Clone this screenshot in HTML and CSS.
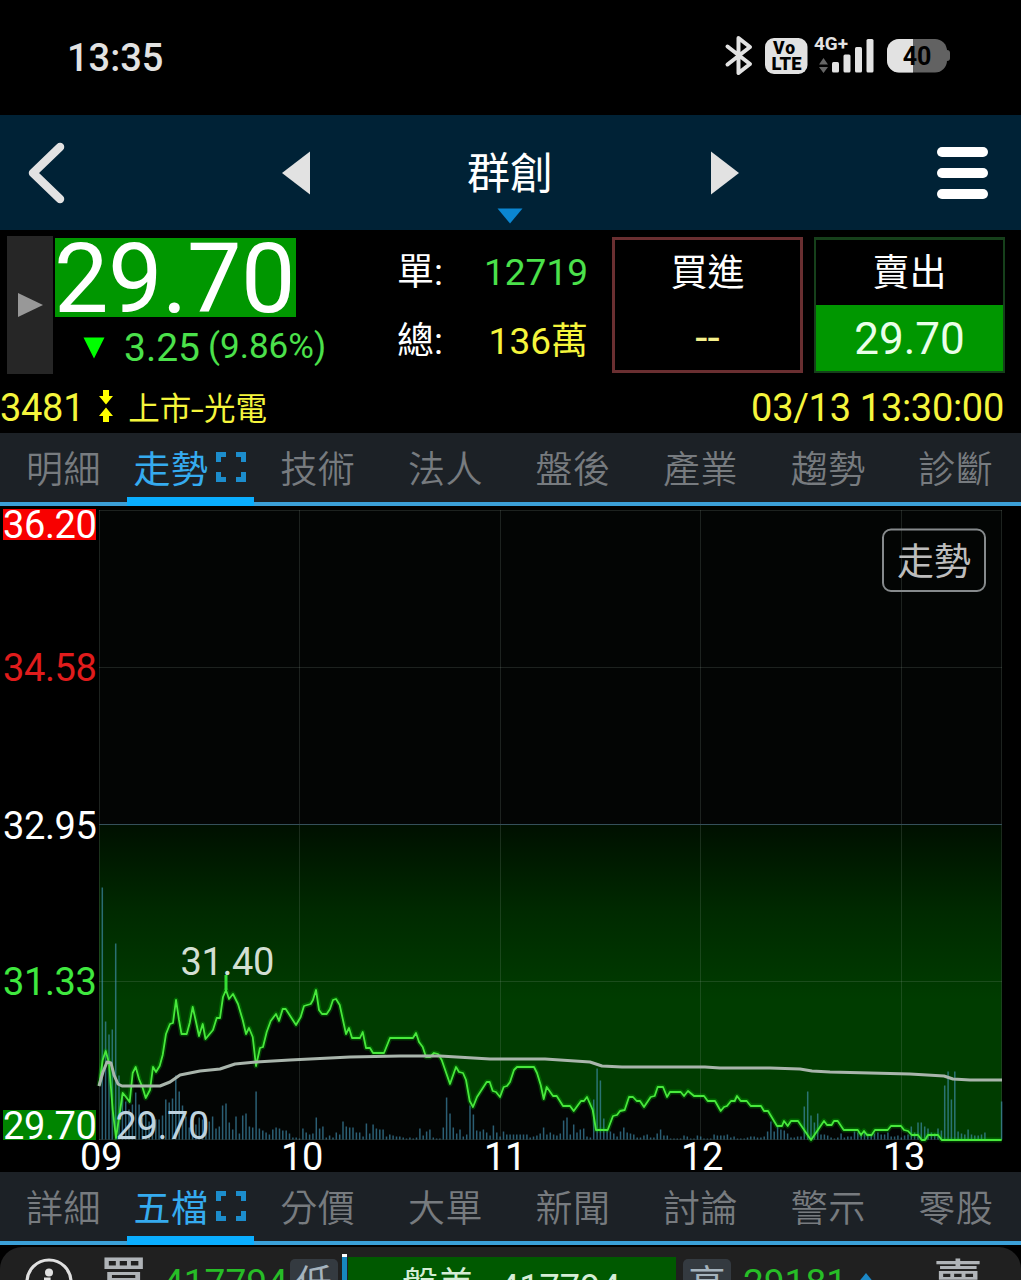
FILE: index.html
```html
<!DOCTYPE html>
<html lang="zh-TW">

<head>
    <meta charset="UTF-8">
    <meta name="viewport" content="width=device-width, initial-scale=1.0">
    <title>群創 3481</title>
    <link rel="stylesheet" href="styles.css">
</head>

<body>
    <div class="status-bar">
        <div class="clock">13:35</div>
        <svg class="status-icons" width="230" height="50" viewBox="720 30 230 50">
            <!-- 藍牙 -->
            <path d="M727.5 46.5 L750 64 L738.5 73 V38 L750 47 L727.5 64.5" fill="none" stroke="#e2e2e2" stroke-width="4" stroke-linecap="round" stroke-linejoin="round" />
            <!-- VoLTE -->
            <rect x="765" y="38" width="42.500" height="36" rx="9" fill="#e2e2e2" />
            <text class="volte" x="784" y="53.500" text-anchor="middle" textLength="22">Vo</text>
            <text class="volte" x="786.500" y="69.500" text-anchor="middle" textLength="30" lengthAdjust="spacingAndGlyphs">LTE</text>
            <!-- 訊號 -->
            <text class="net" x="814" y="50" textLength="34" lengthAdjust="spacingAndGlyphs">4G+</text>
            <path d="M819 64.500 L823.500 58 L828 64.500Z M819 67 L823.500 73 L828 67Z" fill="#666" />
            <g fill="#e2e2e2">
                <rect x="832" y="62" width="7" height="10.500" rx="1.500" />
                <rect x="843.500" y="54.500" width="7" height="18" rx="1.500" />
                <rect x="855" y="47" width="7" height="25.500" rx="1.500" />
                <rect x="866.500" y="39" width="7" height="33.500" rx="1.500" />
            </g>
            <!-- 電池 -->
            <rect x="887" y="39" width="60" height="33.500" rx="12" fill="#626262" />
            <rect x="944" y="50" width="6" height="11" rx="3" fill="#626262" />
            <path d="M913 39 H899 A12 12 0 0 0 887 51 V60.500 A12 12 0 0 0 899 72.500 H913Z" fill="#e2e2e2" />
            <text class="battery" x="917" y="64.500" text-anchor="middle">40</text>
        </svg>
    </div>

    <header class="title-bar">
        <svg class="back" width="40" height="64" viewBox="0 0 40 64"><path d="M33 6 L6 32 L33 58" /></svg>
        <svg class="prev" width="30" height="44" viewBox="0 0 30 44"><path d="M1 22 L29 0.500 V43.500Z" /></svg>
        <div class="stock-name">
            <span>群創</span>
            <svg width="26" height="16" viewBox="0 0 26 16"><path d="M0.500 0.500 H25.500 L13 15.500Z" /></svg>
        </div>
        <svg class="next" width="30" height="44" viewBox="0 0 30 44"><path d="M29 22 L1 0.500 V43.500Z" /></svg>
        <div class="menu"><i></i><i></i><i></i></div>
    </header>

    <section class="quote">
        <div class="quote-main">
            <div class="expand"><svg width="25" height="26" viewBox="0 0 25 26"><path d="M0 1 L25 13 L0 25Z" /></svg></div>
            <div class="price-box">
                <div class="price">29.70</div>
                <div class="change">
                    <svg width="22" height="22" viewBox="0 0 22 22"><path d="M0.500 0.500 H21.500 L11 21.500Z" /></svg>
                    <span class="diff">3.25</span>
                    <span class="percent">(9.86%)</span>
                </div>
            </div>
            <dl class="volume">
                <dt>單:</dt>
                <dd class="down">12719</dd>
                <dt>總:</dt>
                <dd class="flat">136萬</dd>
            </dl>
            <div class="order buy">
                <div>買進</div>
                <div class="order-price">--</div>
            </div>
            <div class="order sell">
                <div>賣出</div>
                <div class="order-price">29.70</div>
            </div>
        </div>
        <div class="quote-info">
            <span class="code">3481</span>
            <svg width="14" height="32" viewBox="0 0 14 32"><path d="M4 0 H10 V6 H14 L7 14.500 L0 6 H4Z M4 32 H10 V26 H14 L7 17.500 L0 26 H4Z" /></svg>
            <span class="market">上市<b>-</b>光電</span>
            <span class="time">03/13 13:30:00</span>
        </div>
    </section>

    <nav class="tabs">
        <a>明細</a>
        <a class="active">走勢<svg width="30" height="30" viewBox="0 0 30 30"><path d="M2.500 10 V2.500 H10 M20 2.500 H27.500 V10 M27.500 20 V27.500 H20 M10 27.500 H2.500 V20" /></svg></a>
        <a>技術</a>
        <a>法人</a>
        <a>盤後</a>
        <a>產業</a>
        <a>趨勢</a>
        <a>診斷</a>
    </nav>

    <svg class="chart" width="1021" height="666" viewBox="0 506 1021 666">
        <defs>
            <linearGradient id="fall" gradientUnits="userSpaceOnUse" x1="0" y1="824" x2="0" y2="1000">
                <stop offset="0" stop-color="#001000" />
                <stop offset="0.500" stop-color="#002a00" />
                <stop offset="1" stop-color="#003c00" />
            </linearGradient>
        </defs>
        <rect x="99" y="510" width="903" height="630" fill="#030504" />
        <path id="fallArea" fill="url(#fall)" />
        <path class="grid" d="M99 510.500 H1002 M99 667.500 H1002 M99 981.500 H1002 M99 1139.500 H1002 M99.500 510 V1140 M299.500 510 V1140 M500.500 510 V1140 M700.500 510 V1140 M901.500 510 V1140 M1001.500 510 V1140" />
        <path class="base-line" d="M99 824.500 H1002" />
        <path id="volumeBars" />
        <path id="priceGlow" />
        <path id="priceLine" />
        <path class="high-mark" d="M226 975 V990" />
        <path id="avgLine" />

        <rect x="3" y="509" width="93" height="31" fill="#f80000" />
        <rect x="3" y="1110" width="93" height="30" fill="#008500" />
        <g class="axis">
            <text x="3" y="538" fill="#fff">36.20</text>
            <text x="3" y="681" fill="#e01c1c">34.58</text>
            <text x="3" y="839" fill="#fff">32.95</text>
            <text x="3" y="995" fill="#3fe83f">31.33</text>
            <text x="3" y="1139" fill="#fff">29.70</text>
            <text x="80" y="1170" fill="#fff">09</text>
            <text x="281" y="1170" fill="#fff">10</text>
            <text x="484" y="1170" fill="#fff">11</text>
            <text x="681" y="1170" fill="#fff">12</text>
            <text x="883" y="1170" fill="#fff">13</text>
            <text x="180.500" y="975" fill="#d3dfd3">31.40</text>
            <text x="115.500" y="1139" fill="#bfd3df">29.70</text>
        </g>
        <rect class="mode-box" x="883" y="529.500" width="102" height="61.500" rx="8" />
        <text class="mode" x="897" y="575">走勢</text>
    </svg>

    <nav class="tabs">
        <a>詳細</a>
        <a class="active">五檔<svg width="30" height="30" viewBox="0 0 30 30"><path d="M2.500 10 V2.500 H10 M20 2.500 H27.500 V10 M27.500 20 V27.500 H20 M10 27.500 H2.500 V20" /></svg></a>
        <a>分價</a>
        <a>大單</a>
        <a>新聞</a>
        <a>討論</a>
        <a>警示</a>
        <a>零股</a>
    </nav>

    <section class="depth">
        <svg class="info" width="48" height="48" viewBox="0 0 48 48"><circle cx="24" cy="24" r="22" /><circle class="dot" cx="24" cy="14.500" r="4" /><path d="M19 21 H24 V36 M18 36 H30" /></svg>
        <div class="side">買</div>
        <div class="amount">417794</div>
        <div class="tag">低</div>
        <div class="marker"></div>
        <div class="gap-bar"><span>盤差</span><span class="num">417794</span></div>
        <div class="tag">高</div>
        <div class="amount sell-amount">29181</div>
        <svg class="up" width="18" height="18" viewBox="0 0 18 18"><path d="M9 0 L18 11 H0Z" /></svg>
        <div class="side sell-side">賣</div>
    </section>

    <script src="chart.js"></script>
</body>

</html>
```

FILE: styles.css
```css
:root {
    --green: #4be14b;
    --yellow: #f5f53c;
    --tab-background: #1c2126;
    --tab-color: #777b7f;
}

* {
    box-sizing: border-box;
}

body {
    margin: 0;
    width: 1021px;
    height: 1280px;
    overflow: hidden;
    background: #000;
    color: #fff;
    font-family: Roboto, "Noto Sans CJK TC", sans-serif;
    font-size: 38px;
    display: flex;
    flex-direction: column;
}

svg {
    display: block;
    flex: none;
}

/* 狀態列 */
.status-bar {
    flex: none;
    height: 115px;
    padding: 30px 71px 0 67px;
    display: flex;
    justify-content: space-between;
}

.clock {
    font-size: 38px;
    font-weight: 500;
    line-height: 57px;
    color: #e2e2e2;
}

.volte,
.net,
.battery {
    font-family: Roboto, sans-serif;
    font-weight: 900;
}

.volte {
    font-size: 17.5px;
}

.net {
    font-size: 18px;
    font-weight: 700;
    fill: #e2e2e2;
}

.battery {
    font-size: 25px;
    font-weight: 700;
}

/* 標題列 */
.title-bar {
    flex: none;
    height: 115px;
    background: #002236;
    padding: 0 33px 0 27px;
    display: grid;
    grid-template-columns: 254px 119px 220px 133px 1fr;
    align-items: center;
}

.back path {
    fill: none;
    stroke: #e2e2e2;
    stroke-width: 8.5;
    stroke-linecap: round;
    stroke-linejoin: round;
}

.prev path,
.next path {
    fill: #e2e2e2;
}

.next {
    justify-self: end;
    margin-right: 13px;
}

.stock-name {
    height: 115px;
    padding-top: 28px;
    display: flex;
    flex-direction: column;
    align-items: center;
    font-size: 43px;
    line-height: 62px;
}

.stock-name svg {
    margin-top: 3px;
}

.stock-name path {
    fill: #0b86d1;
}

.menu {
    justify-self: end;
    display: flex;
    flex-direction: column;
    gap: 11px;
}

.menu i {
    width: 51px;
    height: 10px;
    border-radius: 5px;
    background: #fff;
}

/* 報價 */
.quote {
    flex: none;
    height: 203px;
    padding-top: 6px;
}

.quote-main {
    height: 138px;
    padding: 0 16px 0 7px;
    display: flex;
}

.expand {
    width: 46px;
    background: #262626;
    display: flex;
    align-items: center;
    justify-content: center;
}

.expand path {
    fill: #989898;
}

.price-box {
    width: 344px;
    padding: 2px 0 0 2px;
}

.price {
    width: 241px;
    height: 79px;
    background: #009700;
    font-size: 97px;
    line-height: 83px;
    letter-spacing: -0.5px;
    text-indent: -1px;
    white-space: nowrap;
}

.change {
    margin-top: 7px;
    padding-left: 28px;
    display: flex;
    align-items: center;
    height: 48px;
    color: var(--green);
}

.change path {
    fill: #00ff00;
}

.diff {
    margin-left: 19px;
    font-size: 39px;
}

.percent {
    margin: -3px 0 0 8px;
    font-size: 35px;
}

.volume {
    width: 208px;
    margin: 0;
    padding-right: 17px;
    display: grid;
    grid-template-columns: 50px 1fr;
    grid-template-rows: 69px 69px;
    line-height: 73px;
    white-space: nowrap;
}

.volume dt {
    font-size: 37px;
    line-height: 74px;
}

.volume dd {
    margin: 0;
    text-align: right;
    font-size: 37px;
}

.down {
    color: var(--green);
}

.volume .flat {
    color: var(--yellow);
}

.order {
    height: 136px;
    width: 191px;
    margin: 1px 11px 0 7px;
    border: 3px solid #6a2f31;
    font-size: 37px;
    line-height: 68px;
    text-align: center;
}

.order.sell {
    margin: 1px 0 0 0;
    border-color: #16401b;
    border-width: 3px 2px 2px;
}

.buy .order-price {
    color: #f5f08c;
    font-size: 44px;
    line-height: 61px;
}

.sell .order-price {
    margin-top: -3px;
    height: 66px;
    background: #009700;
    font-size: 44px;
    line-height: 68px;
    color: #e9ffe9;
}

.quote-info {
    height: 59px;
    padding: 9px 17px 0 0;
    display: flex;
    align-items: center;
    color: var(--yellow);
    white-space: nowrap;
}

.quote-info svg {
    margin: -4px 0 0 15px;
}

.quote-info path {
    fill: #ffff00;
}

.code,
.time {
    font-size: 38px;
    letter-spacing: -0.3px;
}

.market {
    margin: -5px 0 0 15px;
    font-size: 31.5px;
}

.market b {
    display: inline-block;
    font-weight: 400;
    transform: scaleX(1.5);
    margin: 0 2px;
}

.time {
    margin-left: auto;
}

/* 分頁 */
.tabs {
    flex: none;
    height: 73px;
    background: var(--tab-background);
    box-shadow: inset 0 -4px #3ba0d8;
    display: grid;
    grid-template-columns: 127px 127px repeat(6, 127.6px);
}

.tabs a {
    display: flex;
    justify-content: center;
    align-items: center;
    padding-bottom: 6px;
    font-size: 37px;
    font-weight: 350;
    letter-spacing: 0.5px;
    color: var(--tab-color);
    white-space: nowrap;
}

.tabs .active {
    padding-right: 2px;
    color: #35abef;
    font-weight: 400;
    box-shadow: inset 0 -9px #0aaeff;
}

.tabs svg {
    margin-left: 7px;
}

.tabs path {
    fill: none;
    stroke: #1c8dcc;
    stroke-width: 5;
}

/* 走勢圖 */
.grid {
    fill: none;
    stroke: #a0b4a8;
    stroke-opacity: 0.17;
}

.base-line {
    stroke: #35505a;
}

#volumeBars {
    stroke: #4496b9;
    stroke-opacity: 0.62;
    stroke-width: 1.5;
}

#priceGlow,
#priceLine,
#avgLine {
    fill: none;
    stroke-linejoin: round;
}

#priceGlow {
    stroke: #00d800;
    stroke-opacity: 0.25;
    stroke-width: 5;
}

#priceLine {
    stroke: #48e83c;
    stroke-width: 1.8;
}

#avgLine {
    stroke: #a9b5ac;
    stroke-width: 3;
}

.high-mark {
    stroke: #35dc35;
    stroke-width: 3;
}

.axis {
    font-size: 38px;
    letter-spacing: -0.4px;
}

.mode-box {
    fill: none;
    stroke: #868a8c;
    stroke-width: 2;
}

.mode {
    font-size: 37px;
    fill: #bdbdbd;
}

/* 五檔 */
.depth {
    flex: none;
    height: 80px;
    margin-top: 2px;
    background: #202020;
    border-radius: 22px 22px 0 0;
    display: grid;
    grid-template-columns: 99px 64px 126px 52px 7px 328px 62px 113px 82px 1fr;
    line-height: 48px;
    white-space: nowrap;
}

.info {
    margin: 11px 0 0 25px;
}

.info circle,
.info path {
    fill: none;
    stroke: #e0e0e0;
    stroke-width: 3.2;
}

.info .dot {
    fill: #e0e0e0;
    stroke: none;
}

.side {
    font-size: 49px;
    font-weight: 500;
    color: #b0b4b8;
    padding-top: 10px;
}

.sell-side {
    font-size: 50px;
    padding-top: 13px;
}

.amount {
    padding-top: 12px;
    font-size: 37px;
    color: #27bd27;
}

.sell-amount {
    padding-left: 5px;
}

.tag {
    width: 48px;
    height: 48px;
    margin: 12px 0 0 1px;
    border-radius: 5px;
    background: #343a40;
    font-size: 37px;
    line-height: 52px;
    text-align: center;
    color: #a5b3bd;
}

.gap-bar + .tag {
    margin-left: 7px;
}

.marker {
    width: 5px;
    margin: 7px 0 0 1px;
    background: #1787bf;
    border-top: 3px solid #fff;
}

.gap-bar {
    margin-top: 10px;
    background: #005900;
    color: #d5edd5;
    font-size: 36px;
    padding: 5px 0 0 54px;
    display: flex;
}

.gap-bar .num {
    margin: 2px 0 0 25px;
}

.up {
    margin: 26px 0 0 6px;
}

.up path {
    fill: #1c88c7;
}
```

FILE: chart.js
```javascript
// 價格線
const price = [
    [99, 1086], [102.7, 1060], [105.7, 1051], [109, 1063], [112.7, 1110], [116, 1138], [122.7, 1093], [126, 1097], [129.7, 1102], [132.7, 1073],
    [135.7, 1067], [139, 1079], [142.7, 1088], [145.7, 1098], [150, 1090], [153, 1067], [156, 1072], [159.7, 1066], [162.7, 1055], [166, 1034],
    [170, 1024], [173, 1023], [176, 1000], [179, 1020], [181.5, 1034], [186.7, 1034], [189.7, 1023], [192.7, 1007], [196, 1022], [199, 1036],
    [202.7, 1024], [205.5, 1039], [213, 1030], [216.7, 1018], [220, 1018], [223, 997], [226, 990], [229, 999], [233, 994], [238, 1004],
    [242.7, 1020], [246, 1034], [249, 1028], [252.7, 1037], [256, 1066], [260, 1048], [263, 1047], [266.7, 1032], [270.7, 1021], [276, 1014],
    [279, 1021], [282.7, 1009], [285.7, 1009], [296, 1025], [300.7, 1017], [304, 1006], [310.7, 1004], [313, 1000], [316, 990], [319, 1010],
    [322, 1014], [326.7, 1014], [330, 1009], [333, 1000], [336, 999], [339.7, 1005], [346, 1034], [349, 1028], [352, 1038], [360, 1038],
    [362.7, 1032], [366, 1048], [370, 1048], [373, 1053], [384, 1053], [390, 1038], [413, 1038], [416, 1033], [419, 1042], [422.7, 1047],
    [426, 1057], [430, 1057], [434, 1053], [438, 1054], [441.7, 1060], [450, 1084], [456, 1067], [459, 1072], [463, 1073], [466, 1080],
    [469.7, 1101], [473, 1107], [477, 1097], [486.7, 1082], [489.7, 1082], [492.7, 1091], [496, 1092], [500, 1097], [503.7, 1087], [507, 1086],
    [510, 1082], [514, 1070], [517, 1067], [534, 1067], [537, 1073], [540.7, 1085], [543.7, 1099], [546.7, 1087], [553, 1096], [556.7, 1096],
    [563, 1106], [570, 1106], [573.7, 1111], [581, 1101], [584, 1101], [587, 1097], [592.7, 1110], [596, 1130], [607.7, 1130], [613, 1116],
    [617, 1115], [620, 1111], [624.7, 1110], [629, 1097], [633, 1097], [636.7, 1101], [640, 1101], [644, 1107], [650.7, 1097], [654.7, 1096],
    [657.7, 1087], [663, 1087], [667, 1097], [670, 1092], [680.7, 1092], [684, 1096], [688, 1091], [694, 1096], [704, 1096], [707.7, 1101],
    [715, 1101], [720.7, 1111], [724, 1107], [727, 1106], [731, 1101], [734.7, 1101], [737, 1096], [740.7, 1101], [746.7, 1101], [750.7, 1106],
    [761, 1106], [764, 1111], [768, 1111], [777, 1126], [782, 1126], [784, 1121], [787.7, 1126], [791, 1121], [798, 1121], [811, 1140],
    [824, 1121], [827, 1125], [831.7, 1125], [834, 1121], [837.7, 1121], [843.7, 1130], [857.7, 1130], [861, 1135], [864, 1131], [867, 1135],
    [871.7, 1135], [875, 1130], [887.7, 1130], [891, 1126], [901, 1126], [904, 1130], [908, 1131], [911.7, 1135], [918, 1135], [921.7, 1140],
    [925, 1140], [928, 1135], [938, 1135], [941.7, 1140], [1001.7, 1140]
];

// 均價線
const average = [
    [99, 1086], [103, 1072], [107, 1062], [111, 1063], [114, 1075], [118, 1084], [122, 1086], [160, 1086], [170, 1082], [180, 1075],
    [200, 1071], [220, 1069], [235, 1064], [256, 1062], [290, 1060], [330, 1058], [350, 1057], [400, 1056], [440, 1056], [490, 1059],
    [545, 1059], [590, 1062], [602, 1066], [622, 1067], [705, 1067], [720, 1068], [770, 1068], [800, 1069], [812, 1071], [830, 1072],
    [870, 1073], [910, 1074], [944, 1076], [953, 1079], [970, 1080], [1002, 1080]
];

// 每分鐘成交量
const volume = [
    252, 118, 105, 110, 196, 64, 45, 38, 30, 35, 47, 35, 22, 28, 18, 25, 20, 20, 24, 40, 37, 41, 64, 48, 34, 23, 12, 23, 15, 22,
    20, 12, 18, 23, 11, 13, 34, 36, 17, 10, 23, 6, 24, 26, 13, 12, 48, 11, 9, 7, 5, 10, 12, 11, 9, 9, 6, 2, 2, 1,
    11, 7, 5, 6, 22, 11, 13, 2, 4, 2, 7, 5, 18, 13, 12, 12, 7, 7, 3, 16, 6, 15, 11, 10, 10, 3, 5, 4, 3, 3,
    2, 1, 2, 1, 2, 11, 4, 8, 10, 2, 1, 1, 12, 42, 26, 12, 6, 10, 3, 5, 34, 25, 9, 8, 10, 7, 4, 14, 7, 3,
    8, 5, 5, 5, 5, 5, 5, 5, 2, 3, 4, 6, 12, 5, 7, 5, 4, 6, 19, 22, 5, 15, 7, 10, 11, 3, 2, 40, 71, 59,
    21, 9, 8, 6, 3, 8, 12, 7, 6, 5, 2, 2, 4, 5, 2, 2, 6, 10, 4, 4, 1, 1, 1, 1, 4, 3, 1, 1, 4, 3,
    1, 1, 1, 5, 4, 4, 4, 5, 2, 3, 1, 1, 1, 2, 3, 3, 2, 2, 3, 8, 18, 8, 13, 10, 9, 6, 2, 2, 3, 3,
    33, 48, 24, 17, 26, 5, 5, 4, 2, 1, 2, 6, 2, 3, 3, 8, 7, 5, 7, 6, 5, 6, 7, 5, 5, 7, 3, 3, 4, 2,
    4, 5, 13, 7, 17, 17, 13, 11, 7, 6, 11, 9, 54, 68, 40, 68, 8, 6, 5, 10, 5, 4, 4, 5, 7, 0, 0, 0, 0, 38
];

const left = 102.3;
const bottom = 1139.5;
const step = 3.343;

function toPath(points) {
    return 'M' + points.map(p => p.join(' ')).join(' L');
}

function setPath(id, d) {
    document.getElementById(id).setAttribute('d', d);
}

const pricePath = toPath(price);
setPath('priceLine', pricePath);
setPath('priceGlow', pricePath);
setPath('fallArea', pricePath + ' V824 H99 Z');
setPath('avgLine', toPath(average));
setPath('volumeBars', volume.map((v, i) => `M${(left + i * step).toFixed(1)} ${bottom} v${-v}`).join(' '));
```
